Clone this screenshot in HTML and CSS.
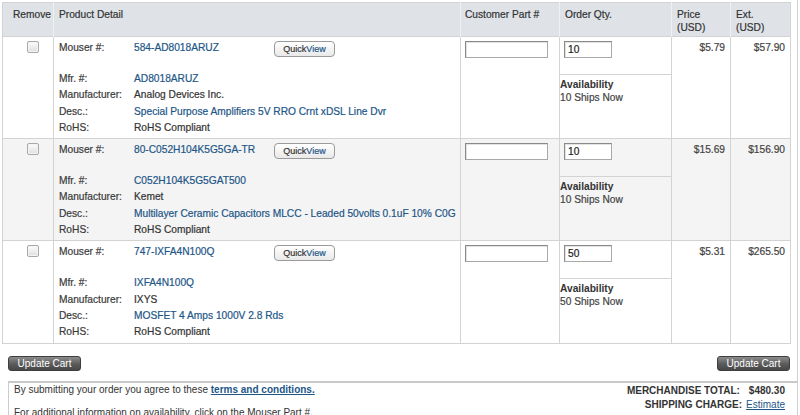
FILE: index.html
```html
<!DOCTYPE html>
<html>
<head>
<meta charset="utf-8">
<link rel="stylesheet" href="styles.css">
</head>
<body>
<div class="page">
  <table class="cart">
    <colgroup>
      <col class="w-rm"><col class="w-pd"><col class="w-cp"><col class="w-qty"><col class="w-pr"><col class="w-ext">
    </colgroup>
    <thead>
      <tr>
        <th class="h-rm">Remove</th>
        <th class="h-pd">Product Detail</th>
        <th class="h-cp">Customer Part #</th>
        <th class="h-qty">Order Qty.</th>
        <th class="h-pr">Price<br>(USD)</th>
        <th class="h-ext">Ext.<br>(USD)</th>
      </tr>
    </thead>
    <tbody>
      <tr class="item">
        <td class="rm"><input type="checkbox" class="chk"></td>
        <td class="pd">
          <div class="pd-top"><span class="lbl">Mouser #:</span><a class="lnk" href="#">584-AD8018ARUZ</a><button class="qv">Quick<span class="qv-b">View</span></button></div>
          <div class="pd-list">
            <span class="lbl">Mfr. #:</span><a class="lnk" href="#">AD8018ARUZ</a>
            <span class="lbl">Manufacturer:</span><span class="val">Analog Devices Inc.</span>
            <span class="lbl">Desc.:</span><a class="lnk" href="#">Special Purpose Amplifiers 5V RRO Crnt xDSL Line Dvr</a>
            <span class="lbl">RoHS:</span><span class="val">RoHS Compliant</span>
          </div>
        </td>
        <td class="cp"><input class="txt cp-in" type="text"></td>
        <td class="qty"><div class="qty-top"><input class="txt qty-in" type="text" value="10"></div><div class="avail"><b class="av-h">Availability</b><br>10 Ships Now</div></td>
        <td class="num">$5.79</td>
        <td class="num">$57.90</td>
      </tr>
      <tr class="item alt">
        <td class="rm"><input type="checkbox" class="chk"></td>
        <td class="pd">
          <div class="pd-top"><span class="lbl">Mouser #:</span><a class="lnk" href="#">80-C052H104K5G5GA-TR</a><button class="qv">Quick<span class="qv-b">View</span></button></div>
          <div class="pd-list">
            <span class="lbl">Mfr. #:</span><a class="lnk" href="#">C052H104K5G5GAT500</a>
            <span class="lbl">Manufacturer:</span><span class="val">Kemet</span>
            <span class="lbl">Desc.:</span><a class="lnk" href="#">Multilayer Ceramic Capacitors MLCC - Leaded 50volts 0.1uF 10% C0G</a>
            <span class="lbl">RoHS:</span><span class="val">RoHS Compliant</span>
          </div>
        </td>
        <td class="cp"><input class="txt cp-in" type="text"></td>
        <td class="qty"><div class="qty-top"><input class="txt qty-in" type="text" value="10"></div><div class="avail"><b class="av-h">Availability</b><br>10 Ships Now</div></td>
        <td class="num">$15.69</td>
        <td class="num">$156.90</td>
      </tr>
      <tr class="item">
        <td class="rm"><input type="checkbox" class="chk"></td>
        <td class="pd">
          <div class="pd-top"><span class="lbl">Mouser #:</span><a class="lnk" href="#">747-IXFA4N100Q</a><button class="qv">Quick<span class="qv-b">View</span></button></div>
          <div class="pd-list">
            <span class="lbl">Mfr. #:</span><a class="lnk" href="#">IXFA4N100Q</a>
            <span class="lbl">Manufacturer:</span><span class="val">IXYS</span>
            <span class="lbl">Desc.:</span><a class="lnk" href="#">MOSFET 4 Amps 1000V 2.8 Rds</a>
            <span class="lbl">RoHS:</span><span class="val">RoHS Compliant</span>
          </div>
        </td>
        <td class="cp"><input class="txt cp-in" type="text"></td>
        <td class="qty"><div class="qty-top"><input class="txt qty-in" type="text" value="50"></div><div class="avail"><b class="av-h">Availability</b><br>50 Ships Now</div></td>
        <td class="num">$5.31</td>
        <td class="num">$265.50</td>
      </tr>
    </tbody>
  </table>

  <div class="actions">
    <button class="upd">Update Cart</button>
    <button class="upd">Update Cart</button>
  </div>

  <div class="summary">
    <div class="notes">
      <p class="note">By submitting your order you agree to these <a class="terms" href="#">terms and conditions.</a></p>
      <p class="note">For additional information on availability, click on the Mouser Part #.</p>
    </div>
    <div class="totals">
      <div class="tot"><span class="tot-l">MERCHANDISE TOTAL:</span><span class="tot-v">$480.30</span></div>
      <div class="ship"><span class="tot-l">SHIPPING CHARGE:</span><a class="est" href="#">Estimate</a></div>
    </div>
  </div>
</div>
</body>
</html>
```

FILE: styles.css
```css
html, body {
  margin: 0;
  padding: 0;
  background: #fff;
}
body {
  font-family: "Liberation Sans", Arial, sans-serif;
  font-size: 10.2px;
  color: #333;
  overflow: hidden;
}
.page {
  width: 788px;
  padding: 2px 7px 0 2px;
  border-right: 1px solid #d0d0d0;
  min-height: 413px;
}
.cart {
  width: 789px;
  border-collapse: collapse;
  table-layout: fixed;
  border: 1px solid #d3d3d3;
  -webkit-text-stroke: 0.2px;
}
.w-rm { width: 51px; }
.w-pd { width: 407px; }
.w-cp { width: 99px; }
.w-qty { width: 112px; }
.w-pr { width: 59px; }
.w-ext { width: 60px; }

.cart th {
  background: #dfe3e8;
  font-weight: normal;
  text-align: left;
  vertical-align: top;
  line-height: 13px;
  padding: 5px 4px 2px 5px;
  border-left: 1px solid #eef0f3;
  color: #333;
}
.cart th.h-rm { padding-left: 10px; border-left: 0; }
.cart th.h-pd { padding-left: 5px; }
.cart th.h-cp { padding-left: 4px; }

.cart td {
  border: 1px solid #d3d3d3;
  vertical-align: top;
  padding: 0;
}
.item.alt td { background: #f4f4f4; }

.rm { padding: 4px 0 0 24px !important; }
.chk {
  -webkit-appearance: none;
  appearance: none;
  box-sizing: border-box;
  width: 12px;
  height: 12px;
  margin: 0;
  display: block;
  border: 1px solid #a9a9a9;
  border-radius: 2px;
  background: linear-gradient(#fdfdfd, #dedede);
  box-shadow: inset 0 0 0 1px #f4f4f4;
}

.pd { padding: 4px 4px 2px 5px !important; }
.pd-top {
  display: grid;
  grid-template-columns: 75px 140px auto;
  align-items: start;
  height: 16px;
  line-height: 13px;
}
.pd-list {
  display: grid;
  grid-template-columns: 75px 1fr;
  line-height: 16.3px;
  margin-top: 14px;
}
.lbl { color: #3a3a3a; }
.val { color: #333; }
.lnk {
  color: #1d5687;
  text-decoration: none;
  white-space: nowrap;
}
.qv {
  width: 61px;
  height: 16px;
  padding: 0;
  border: 1px solid #9a9a9a;
  border-radius: 4px;
  background: linear-gradient(#ffffff, #e9e9e9);
  font-family: "Liberation Sans", Arial, sans-serif;
  font-size: 9px;
  color: #333;
  line-height: 14px;
  -webkit-text-stroke: 0.2px;
}
.qv-b { color: #1d5687; }

.txt {
  box-sizing: border-box;
  height: 17px;
  margin: 0;
  padding: 0 3px;
  border: 1px solid #a8a8a8;
  border-top-color: #8a8a8a;
  border-left-color: #8a8a8a;
  box-shadow: inset 1px 1px 0 #e2e2e2;
  font-family: "Liberation Sans", Arial, sans-serif;
  font-size: 10.2px;
  color: #222;
  display: block;
  background: #fff;
}
.cp { padding: 4px 0 0 4px !important; }
.cp-in { width: 83px; }
.qty-top {
  box-sizing: border-box;
  height: 38px;
  padding: 4px 0 0 4px;
  border-bottom: 1px solid #d3d3d3;
}
.qty-in { width: 48px; }
.avail {
  padding: 3px 0 0 0;
  line-height: 13px;
  color: #444;
}
.av-h { color: #333; -webkit-text-stroke: 0; }
.num {
  text-align: right;
  padding: 4px 5px 0 0 !important;
  line-height: 13px;
  color: #444;
}

.actions {
  display: flex;
  justify-content: space-between;
  margin: 12px 0 0 6px;
  width: 782px;
}
.upd {
  height: 15px;
  width: 73px;
  padding: 0;
  border: 1px solid #3e3e3e;
  border-radius: 3px;
  background: linear-gradient(#8c8c8c, #5a5a5a 55%, #484848);
  color: #fff;
  font-family: "Liberation Sans", Arial, sans-serif;
  font-size: 10px;
  line-height: 13px;
}

.summary {
  display: flex;
  justify-content: space-between;
  margin: 10px -7px 0 6px;
  border-top: 2px solid #c9c9c9;
  border-left: 1px solid #cccccc;
  height: 40px;
}
.notes { padding: 0 0 0 5px; }
.note {
  margin: 0 0 10px 0;
  font-size: 10px;
  line-height: 13px;
  color: #333;
}
.terms {
  color: #1d5687;
  font-weight: bold;
  text-decoration: underline;
}
.totals {
  padding: 1px 12px 0 0;
  text-align: right;
  line-height: 14px;
  font-size: 10px;
}
.tot-l { font-weight: bold; color: #333; }
.tot-v { font-weight: bold; color: #333; margin-left: 9px; }
.est { color: #1d5687; text-decoration: underline; margin-left: 4px; }
```
